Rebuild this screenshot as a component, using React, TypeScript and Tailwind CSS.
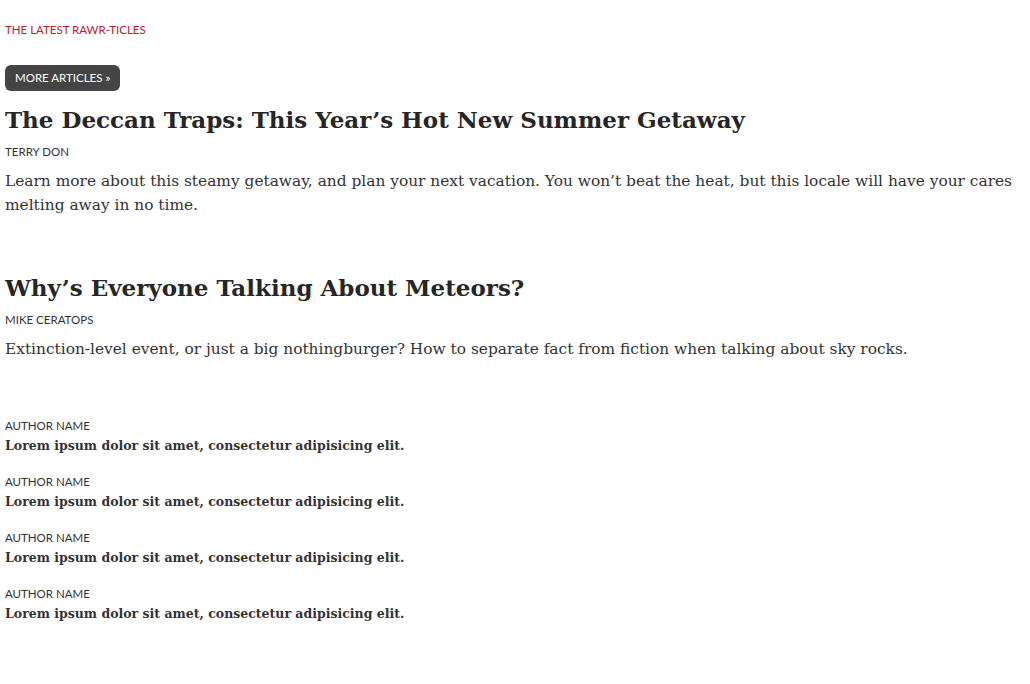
const serif = "font-['DejaVu_Serif',serif]";

const articles = [
  {
    title: 'The Deccan Traps: This Year’s Hot New Summer Getaway',
    author: 'Terry Don',
    blurb:
      'Learn more about this steamy getaway, and plan your next vacation. You won’t beat the heat, but this locale will have your cares melting away in no time.',
  },
  {
    title: 'Why’s Everyone Talking About Meteors?',
    author: 'Mike Ceratops',
    blurb:
      'Extinction-level event, or just a big nothingburger? How to separate fact from fiction when talking about sky rocks.',
  },
];

export default function App() {
  return (
    <div className="min-h-screen bg-white px-[5px] pt-[22px] font-['Lato',sans-serif] text-[#333]">
      <p className="text-[11.5px] uppercase leading-[16px] text-[#b8222a]">The latest rawr-ticles</p>

      <button className="mt-[27px] block h-[26px] rounded-[6px] bg-[#444] px-[10px] text-[11.5px] uppercase text-white">
        More articles »
      </button>

      {articles.map((a, i) => (
        <article key={i} className={i === 0 ? 'mt-[11px]' : 'mt-[53px]'}>
          <h2 className={`${serif} text-[23px] font-bold leading-[36px] text-[#262626]`}>{a.title}</h2>
          <p className="mt-[6px] text-[11.5px] uppercase leading-[16px]">{a.author}</p>
          <p className={`${serif} mt-[9px] text-[15.4px] leading-[24px]`}>{a.blurb}</p>
        </article>
      ))}

      <ul className="mt-[57px] space-y-[18px]">
        {[0, 1, 2, 3].map((n) => (
          <li key={n}>
            <p className="text-[11.5px] uppercase leading-[16px]">Author name</p>
            <p className={`${serif} mt-[2px] text-[12.5px] font-bold leading-[20px]`}>
              Lorem ipsum dolor sit amet, consectetur adipisicing elit.
            </p>
          </li>
        ))}
      </ul>
    </div>
  );
}
